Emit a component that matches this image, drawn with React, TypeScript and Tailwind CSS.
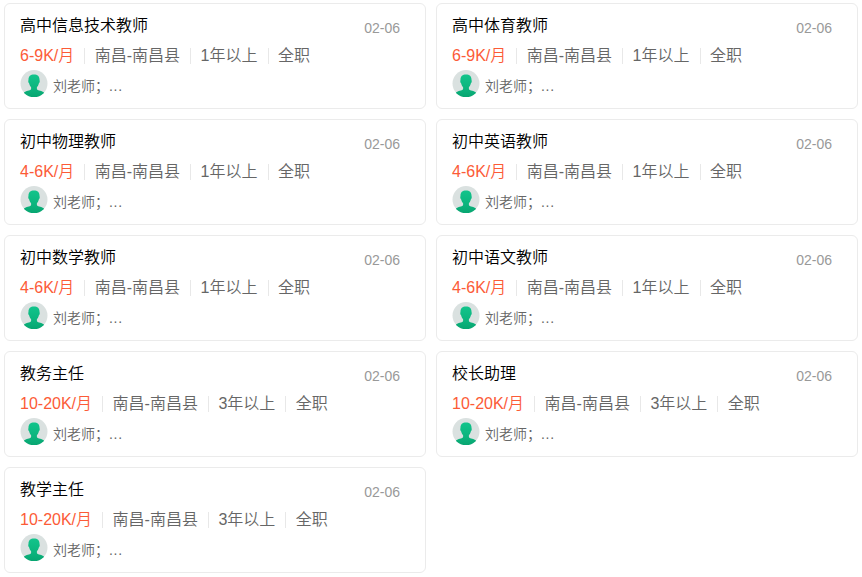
import React from "react";

type Job = { title: string; pay: string; years: string };

const jobs: Job[] = [
  { title: "高中信息技术教师", pay: "6-9K/月", years: "1年以上" },
  { title: "高中体育教师", pay: "6-9K/月", years: "1年以上" },
  { title: "初中物理教师", pay: "4-6K/月", years: "1年以上" },
  { title: "初中英语教师", pay: "4-6K/月", years: "1年以上" },
  { title: "初中数学教师", pay: "4-6K/月", years: "1年以上" },
  { title: "初中语文教师", pay: "4-6K/月", years: "1年以上" },
  { title: "教务主任", pay: "10-20K/月", years: "3年以上" },
  { title: "校长助理", pay: "10-20K/月", years: "3年以上" },
  { title: "教学主任", pay: "10-20K/月", years: "3年以上" },
];

function Avatar() {
  return (
    <svg viewBox="0 0 28 28" className="size-7 shrink-0">
      <defs>
        <clipPath id="face">
          <circle cx="14" cy="13.6" r="13.5" />
        </clipPath>
        <linearGradient id="figure" x1="0" y1="0" x2="0" y2="1">
          <stop offset="0" stopColor="#12c48b" />
          <stop offset="0.6" stopColor="#0cb47d" />
          <stop offset="1" stopColor="#07a46f" />
        </linearGradient>
      </defs>
      <g clipPath="url(#face)">
        <rect width="28" height="28" fill="#dae1e0" />
        <path
          d="M14 4.500C10.200 4.500 8.200 6.700 8.500 10.200C7.900 10.700 8.400 13 9.200 13.500C9.600 15.200 10.300 16.400 11.100 17.200V19.200C9.900 20.700 6 20.600 4 22.500V28H24V22.500C22 20.600 18.100 20.700 16.900 19.200V17.200C17.700 16.400 18.400 15.200 18.800 13.500C19.600 13 20.100 10.700 19.500 10.200C19.800 6.700 17.800 4.500 14 4.500Z"
          fill="url(#figure)"
        />
      </g>
    </svg>
  );
}

function Divider() {
  return <span className="ml-[10px] mr-[9.5px] h-4 w-px bg-[#e8e8e8]" />;
}

function Card({ job }: { job: Job }) {
  return (
    <article className="h-[106px] rounded-md border border-[#ebebeb] bg-white pl-[15px] pr-[25px] pt-[7px]">
      <div className="flex h-[30px] justify-between">
        <h3 className="text-base leading-[30px] font-[350] text-black">{job.title}</h3>
        <time className="pt-px text-sm leading-[32px] text-[#999]">02-06</time>
      </div>
      <div className="flex h-[30px] items-center whitespace-nowrap text-base text-[#666]">
        <span className="text-[#fc5b37]">{job.pay}</span>
        <Divider />
        <span>南昌-南昌县</span>
        <Divider />
        <span>{job.years}</span>
        <Divider />
        <span>全职</span>
      </div>
      <div className="-mt-px flex h-7 gap-[5px] text-sm text-[#666]">
        <Avatar />
        <span className="pt-[2px] leading-7">
          刘老师；<span className="tracking-[0.7px]">...</span>
        </span>
      </div>
    </article>
  );
}

export default function App() {
  return (
    <main className="h-[577px] w-[862px] overflow-hidden bg-white px-1 pt-[3px] font-['Liberation_Sans','Noto_Sans_CJK_SC',sans-serif] font-[350]">
      <div className="grid grid-cols-[422px_422px] gap-[10px]">
        {jobs.map((job) => (
          <Card key={job.title} job={job} />
        ))}
      </div>
    </main>
  );
}
